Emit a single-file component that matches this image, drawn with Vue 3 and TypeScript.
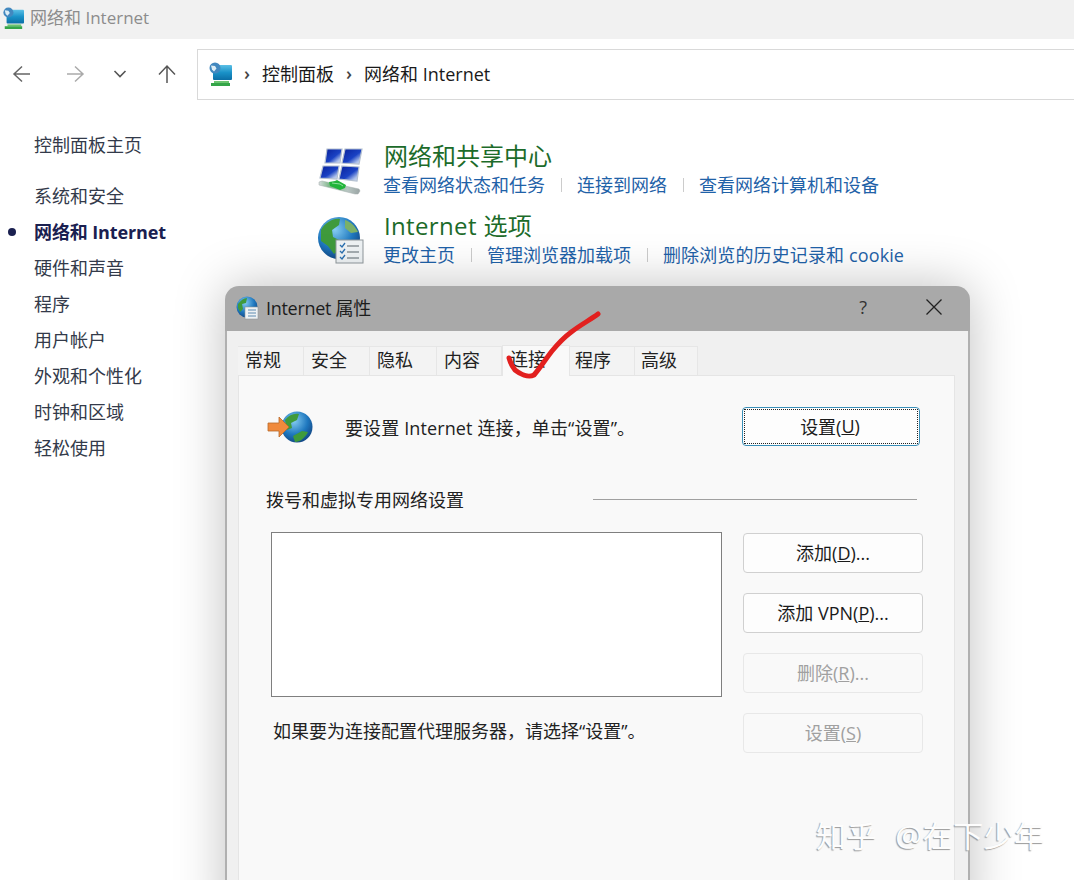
<script setup lang="ts">
const navItems = [
  { label: '系统和安全', active: false },
  { label: '网络和 Internet', active: true },
  { label: '硬件和声音', active: false },
  { label: '程序', active: false },
  { label: '用户帐户', active: false },
  { label: '外观和个性化', active: false },
  { label: '时钟和区域', active: false },
  { label: '轻松使用', active: false },
]
const tabs = ['常规', '安全', '隐私', '内容', '连接', '程序', '高级']
const panes = [
  '9,4 24,4 22,18 7,18',
  '27,4 44,4 41,19 24,18',
  '5,21 21,21 19,34 2,33',
  '24,21 41,22 39,36 21,34',
]
</script>

<template>
  <div class="page">
    <svg class="defs" width="0" height="0">
      <defs>
        <linearGradient id="screen" x1="0" y1="0" x2="0" y2="1">
          <stop offset="0" stop-color="#5cc0e6" />
          <stop offset="0.5" stop-color="#1a92c8" />
          <stop offset="1" stop-color="#0b6ea6" />
        </linearGradient>
        <g id="net-icon">
          <rect x="5" y="3" width="19" height="15" rx="1" fill="url(#screen)" />
          <rect x="6" y="19" width="15" height="2" fill="#6cc470" />
          <rect x="3" y="21" width="19" height="3" fill="#34a548" />
          <circle cx="7" cy="6" r="5.500" fill="#4288bf" />
          <path d="M3 3.500l4 .5 1.500 2.500-2.500 3-2-2z" fill="#dcedf6" />
        </g>
        <radialGradient id="globe" cx="0.4" cy="0.3" r="0.8">
          <stop offset="0" stop-color="#86cdf2" />
          <stop offset="0.55" stop-color="#1f78bf" />
          <stop offset="1" stop-color="#0f3a75" />
        </radialGradient>
        <linearGradient id="pane" x1="0" y1="0" x2="1" y2="1">
          <stop offset="0" stop-color="#08209a" />
          <stop offset="0.55" stop-color="#1a42c4" />
          <stop offset="0.8" stop-color="#a8bce8" />
          <stop offset="1" stop-color="#e8eef8" />
        </linearGradient>
        <linearGradient id="pipe" x1="0" y1="0" x2="1" y2="0">
          <stop offset="0" stop-color="#d5dcdc" />
          <stop offset="0.25" stop-color="#7fb88a" />
          <stop offset="0.7" stop-color="#b8c6c2" />
          <stop offset="1" stop-color="#9aa4a4" />
        </linearGradient>
      </defs>
    </svg>

    <header class="titlebar">
      <svg class="small-net" viewBox="0 0 24 24" width="22" height="22">
        <use href="#net-icon" />
      </svg>
      <span class="title-text">网络和 Internet</span>
    </header>

    <div class="toolbar">
      <div class="nav-btns">
        <svg class="tb-icon" viewBox="0 0 20 20" width="20" height="20"><path d="M18 10H2M10 2.500 2 10l8 7.500" fill="none" stroke="#666" stroke-width="1.500" /></svg>
        <svg class="tb-icon" viewBox="0 0 20 20" width="20" height="20"><path d="M2 10h16M10 2.500 18 10l-8 7.500" fill="none" stroke="#aaa" stroke-width="1.500" /></svg>
        <svg class="tb-icon chev" viewBox="0 0 14 14" width="14" height="14"><path d="M1.500 4 7 9.500 12.500 4" fill="none" stroke="#555" stroke-width="1.600" /></svg>
        <svg class="tb-icon" viewBox="0 0 20 20" width="20" height="20"><path d="M10 19V2M2 10.500 10 2l8 8.500" fill="none" stroke="#555" stroke-width="1.500" /></svg>
      </div>
      <div class="address">
        <svg class="addr-net" viewBox="0 0 24 24" width="24" height="24">
          <use href="#net-icon" />
        </svg>
        <span class="crumb-sep">›</span>
        <span class="crumb">控制面板</span>
        <span class="crumb-sep">›</span>
        <span class="crumb">网络和 Internet</span>
      </div>
    </div>

    <div class="body">
      <nav class="sidebar">
        <div class="home-link">控制面板主页</div>
        <ul class="nav-list">
          <li v-for="item in navItems" :key="item.label" :class="['nav-item', { active: item.active }]">{{ item.label }}</li>
        </ul>
      </nav>

      <main class="content">
        <section class="cat">
          <svg class="cat-icon" viewBox="0 0 46 50" width="46" height="50">
            <polygon v-for="(p, i) in panes" :key="i" :points="p" fill="url(#pane)" stroke="#b4c0d0" stroke-width="1.200" />
            <path d="M1 37l3-1 37 8 1 2-2 3-3 0-36-9z" fill="url(#pipe)" stroke="#a0aaaa" stroke-width=".5" />
            <path d="M11 37l6-1 2-1 9 5-1 3-5 2-10-4z" fill="#22b43a" />
            <path d="M14 38l8 1 3 2" fill="none" stroke="#8ce09a" stroke-width="1" />
          </svg>
          <div class="cat-body">
            <h2 class="cat-title">网络和共享中心</h2>
            <div class="cat-links">
              <a>查看网络状态和任务</a><i class="sep"></i><a>连接到网络</a><i class="sep"></i><a>查看网络计算机和设备</a>
            </div>
          </div>
        </section>
        <section class="cat second">
          <svg class="cat-icon" viewBox="0 0 46 50" width="46" height="50">
            <circle cx="21" cy="23" r="21" fill="url(#globe)" />
            <path d="M3 15C8 7 15 3 22 4l-1 6-7 5 1 7 8 4-2 9-5 4-6-8-7-5z" fill="#3f9a3c" />
            <path d="M27 5c6 2 10 6 13 12l-7 1-6-5z" fill="#7ab068" />
            <rect x="18" y="25" width="27" height="23" fill="#eef2f4" stroke="#8f979c" stroke-width="1" />
            <path d="M22 30l2 2 3-4M22 36l2 2 3-4M22 42l2 2 3-4" fill="none" stroke="#2a6fb0" stroke-width="1.300" />
            <path d="M29 31h12M29 37h12M29 43h12" stroke="#5b666c" stroke-width="1" />
          </svg>
          <div class="cat-body">
            <h2 class="cat-title">Internet 选项</h2>
            <div class="cat-links">
              <a>更改主页</a><i class="sep"></i><a>管理浏览器加载项</a><i class="sep"></i><a class="wide">删除浏览的历史记录和 cookie</a>
            </div>
          </div>
        </section>
      </main>
    </div>

    <div class="dialog">
      <div class="dlg-title">
        <svg class="dlg-icon" viewBox="0 0 24 24" width="24" height="24">
          <circle cx="11" cy="11" r="10.500" fill="url(#globe)" />
          <path d="M2 8c3-4 6-6 9-6l-1 5-4 1 1 5-3 3-2-4z" fill="#3f9a3c" />
          <rect x="9" y="11" width="13" height="12" fill="#eef2f4" stroke="#8f979c" stroke-width=".6" />
          <path d="M12 14h8M12 17h8M12 20h8" stroke="#4c7fa8" stroke-width=".9" />
        </svg>
        <span class="dlg-name">Internet 属性</span>
        <span class="dlg-help">?</span>
        <svg class="dlg-close" viewBox="0 0 16 16" width="16" height="16"><path d="M.5.500l15 15M15.500.500l-15 15" stroke="#222" stroke-width="1.300" /></svg>
      </div>

      <div class="dlg-body">
        <div class="tabs">
          <div v-for="t in tabs" :key="t" :class="['tab', { current: t === '连接' }]">{{ t }}</div>
        </div>
        <div class="panel">
          <div class="setup-row">
            <svg class="setup-icon" viewBox="0 0 46 32" width="46" height="32">
              <circle cx="30" cy="16" r="15.500" fill="url(#globe)" />
              <path d="M18 9c4-5 9-7 14-6l-2 6-6 3 1 5-5 2zM26 25l9-5 6 1c-3 6-8 10-13 10z" fill="#3f9a3c" />
              <path d="M1 12h11V6l10 10-10 10v-6H1z" fill="#f08a3c" stroke="#b86a2c" stroke-width=".8" />
            </svg>
            <span class="setup-text">要设置 Internet 连接，单击“设置”。</span>
            <button class="btn primary"><span class="focus-ring">设置(<u>U</u>)</span></button>
          </div>

          <div class="group-head">
            <span class="group-label">拨号和虚拟专用网络设置</span>
            <span class="group-line"></span>
          </div>

          <div class="vpn-grid">
            <div class="vpn-left">
              <div class="listbox"></div>
              <p class="proxy-text">如果要为连接配置代理服务器，请选择“设置”。</p>
            </div>
            <div class="vpn-btns">
              <button class="btn side">添加(<u>D</u>)...</button>
              <button class="btn side">添加 VPN(<u>P</u>)...</button>
              <button class="btn side disabled">删除(<u>R</u>)...</button>
              <button class="btn side disabled">设置(<u>S</u>)</button>
            </div>
          </div>
        </div>
      </div>
    </div>

    <svg class="check" viewBox="0 0 1074 880" width="1074" height="880">
      <path d="M598 314C590 320 580 325 570 333C562 339 557 345 552 351C545 360 540 368 534 375C528 378 520 374 515 370C512 366 510 362 509 358" fill="none" stroke="#e2201f" stroke-width="5" stroke-linecap="round" stroke-linejoin="round" />
    </svg>

    <div class="watermark">知乎 @在下少年</div>
  </div>
</template>

<style>
html, body { margin: 0; overflow: hidden; background: #fff; }
</style>

<style scoped>
.page {
  position: relative;
  width: 1074px;
  height: 880px;
  overflow: hidden;
  background: #fff;
  font-family: "Open Sans", "Noto Sans CJK SC", sans-serif;
  font-size: 18px;
  color: #222;
}
.defs { position: absolute; }
.titlebar {
  height: 39px;
  background: #f1f1f1;
  display: flex;
  align-items: center;
  padding: 0 0 6px 2px;
  box-sizing: border-box;
  gap: 6px;
}
.small-net { flex: none; margin-top: 2px; }
.title-text { color: #8c8c8c; font-size: 17px; }
.toolbar {
  height: 61px;
  display: flex;
  align-items: stretch;
  padding-top: 10px;
  box-sizing: border-box;
}
.nav-btns {
  width: 197px;
  flex: none;
  display: flex;
  align-items: center;
  padding: 0 0 2px 12px;
  box-sizing: border-box;
}
.tb-icon { flex: none; margin-right: 33px; }
.tb-icon.chev { margin-left: -5px; margin-right: 30px; }
.address {
  flex: 1;
  border: 1px solid #d9d9d9;
  border-right: 0;
  display: flex;
  align-items: center;
  padding: 0 0 3px 10px;
  gap: 9px;
  color: #1a1a1a;
}
.addr-net { flex: none; margin-top: 2px; }
.crumb-sep { color: #444; font-size: 18px; font-weight: 600; margin: 0 3px; }
.body { display: flex; }
.sidebar { width: 318px; flex: none; padding-left: 34px; box-sizing: border-box; padding-top: 32px; }
.home-link { line-height: 26px; color: #333a4a; }
.nav-list { list-style: none; margin: 20px 0 0; padding: 0; }
.nav-item { height: 36px; line-height: 36px; color: #333a4a; position: relative; white-space: nowrap; }
.nav-item.active { font-weight: 700; color: #1a2050; letter-spacing: -0.12px; }
.nav-item.active::before {
  content: "";
  position: absolute;
  left: -26px;
  top: 14px;
  width: 8px;
  height: 8px;
  border-radius: 50%;
  background: #1a2050;
}
.content { flex: 1; padding-top: 41px; }
.cat { display: flex; gap: 20px; height: 70px; }
.cat-icon { flex: none; margin-top: 4px; }
.cat-body { min-width: 0; }
.cat-title {
  margin: 0;
  font-weight: 400;
  font-size: 24px;
  line-height: 30px;
  color: #1c6b2a;
}
.second .cat-title { letter-spacing: 0.35px; }
.cat-links { display: flex; align-items: center; line-height: 28px; color: #1f62a8; white-space: nowrap; margin-left: -1px; }
.wide { letter-spacing: 0.12px; }
.sep { display: inline-block; width: 1px; height: 14px; background: #ccc; margin: 0 15px 0 16px; }
.dialog {
  position: absolute;
  left: 225px;
  top: 286px;
  width: 745px;
  height: 640px;
  border-radius: 14px 14px 0 0;
  background: #f0f0f0;
  box-shadow: 0 0 50px rgba(0, 0, 0, 0.25);
  overflow: hidden;
  display: flex;
  flex-direction: column;
}
.dlg-title {
  height: 45px;
  flex: none;
  background: #a9a9a9;
  display: flex;
  align-items: center;
  padding: 0 0 3px 11px;
  box-sizing: border-box;
  color: #1c1c1c;
}
.dlg-icon { flex: none; margin-right: 6px; margin-top: 2px; }
.dlg-name { flex: 1; letter-spacing: -0.3px; }
.dlg-help { margin-right: 59px; color: #333; }
.dlg-close { margin-right: 28px; flex: none; }
.dlg-body {
  flex: 1;
  border-left: 2px solid #b0b0b0;
  border-right: 2px solid #b0b0b0;
  padding: 14px 13px 0 11px;
  min-height: 0;
}
.tabs { display: flex; height: 30px; align-items: flex-end; }
.tab {
  width: 66px;
  height: 29px;
  line-height: 26px;
  padding-left: 7px;
  box-sizing: border-box;
  background: #f3f3f3;
  border: 1px solid #e6e6e6;
  border-bottom: 0;
  border-left: 0;
  color: #222;
}
.tab:nth-child(3) { width: 67px; }
.tab:nth-child(4) { width: 65px; }
.tab.current {
  height: 31px;
  margin-bottom: -1px;
  background: #f9f9f9;
  position: relative;
  padding-left: 7px;
  width: 68px;
  border-left: 1px solid #e6e6e6;
}
.tab.current + .tab { width: 65px; padding-left: 5px; }
.tab:last-child { width: 63px; padding-left: 6px; }
.panel {
  background: #f9f9f9;
  border: 1px solid #e5e5e5;
  height: 600px;
  box-sizing: border-box;
  padding: 31px 0 0 27px;
}
.setup-row { display: flex; align-items: center; height: 39px; color: #222; padding-left: 1px; }
.setup-icon { flex: none; margin-right: 32px; }
.setup-text { flex: 1; letter-spacing: 0.12px; }
.btn {
  font: inherit;
  color: #1a1a1a;
  background: #fdfdfd;
  border: 1px solid #d0d0d0;
  border-radius: 4px;
  padding: 0 0 2px;
  box-sizing: border-box;
  white-space: nowrap;
}
.btn.primary {
  width: 178px;
  height: 39px;
  margin-right: 34px;
  border-color: #3a8fb8;
  padding: 1px;
  flex: none;
}
.focus-ring {
  display: flex;
  align-items: center;
  justify-content: center;
  height: 100%;
  padding: 0 2px 2px 0;
  border: 1px dotted #222;
  box-sizing: border-box;
}
.group-head { display: flex; align-items: center; margin-top: 39px; height: 28px; }
.group-label { width: 327px; flex: none; }
.group-line { width: 324px; height: 1px; background: #a0a0a0; }
.vpn-grid { display: flex; margin-top: 19px; }
.vpn-left { width: 477px; flex: none; padding-left: 5px; box-sizing: border-box; }
.listbox { width: 451px; height: 165px; background: #fff; border: 1px solid #7f7f7f; box-sizing: border-box; }
.proxy-text { margin: 20px 0 0 2px; line-height: 28px; white-space: nowrap; }
.vpn-btns { display: flex; flex-direction: column; gap: 20px; padding-top: 1px; }
.btn.side { width: 180px; height: 40px; }
.btn.disabled { color: #a0a0a0; background: #f9f9f9; border-color: #e8e8e8; }
.check { position: absolute; left: 0; top: 0; z-index: 5; pointer-events: none; }
.watermark {
  position: absolute;
  left: 816px;
  top: 816px;
  z-index: 6;
  font-size: 30px;
  line-height: 40px;
  letter-spacing: 0.5px;
  word-spacing: 10px;
  color: #fdfdfd;
  text-shadow: -1px 1px 1px #9a9a9a;
  white-space: nowrap;
}
</style>
